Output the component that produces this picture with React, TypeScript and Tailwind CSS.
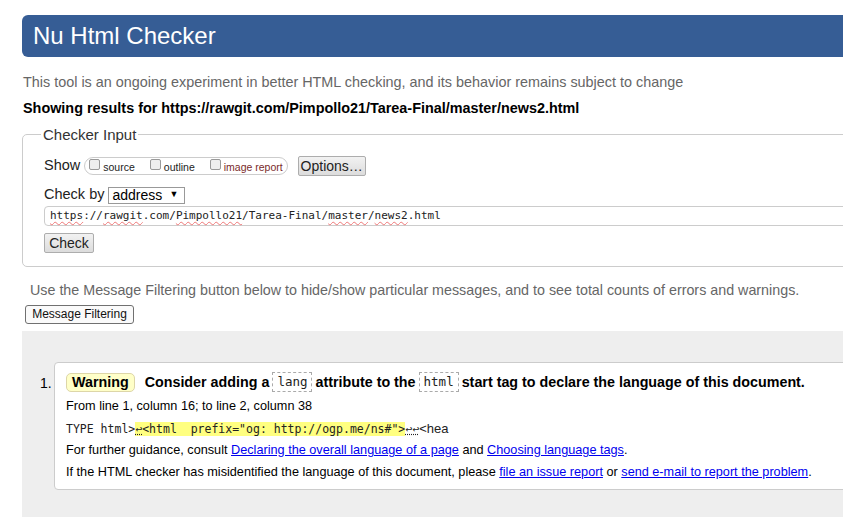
const sans = "font-['Liberation_Sans',Arial,sans-serif]";
const mono = "font-['DejaVu_Sans_Mono','Liberation_Mono',monospace]";

function Squiggle({ children }: { children: React.ReactNode }) {
  return <span className="underline decoration-wavy decoration-[#e77] decoration-1 underline-offset-2">{children}</span>;
}

function Box({ label, color = "text-[#222]" }: { label: string; color?: string }) {
  return (
    <span className="flex items-center whitespace-nowrap">
      <span className="w-[11px] h-[11px] rounded-[2px] border border-[#999] bg-[#eee] mr-[3px] -mt-[2px]" />
      <span className={`text-[10.5px] leading-[12px] pt-[2px] ${color}`}>{label}</span>
    </span>
  );
}

function Code({ children }: { children: React.ReactNode }) {
  return (
    <span className={`${mono} font-normal text-[12.5px] inline-block border border-dashed border-[#aaa] px-[4px] leading-[18px] mx-[3px] align-middle text-[#222]`}>
      {children}
    </span>
  );
}

function Link({ children }: { children: React.ReactNode }) {
  return <a href="#" className="text-[#00e] underline">{children}</a>;
}

export default function App() {
  return (
    <div className={`w-[843px] h-[517px] overflow-hidden bg-white ${sans} text-black`}>
      <div className="w-[900px] pl-[22px] pt-[15px]">
        <h1 className="h-[42px] bg-[#365d95] text-white text-[24px] leading-[42px] pl-[11px] rounded-l-[6px]">
          Nu Html Checker
        </h1>
        <p className="mt-[17px] pl-px text-[14.4px] leading-[16px] text-[#666]">
          This tool is an ongoing experiment in better HTML checking, and its behavior remains subject to change
        </p>
        <p className="mt-[10px] pl-px text-[14.4px] leading-[16px] font-bold">
          Showing results for https://rawgit.com/Pimpollo21/Tarea-Final/master/news2.html
        </p>

        {/* Checker input */}
        <fieldset className="mt-[10px] border border-[#ccc] rounded-[5px] pl-[21px] pb-[13px]">
          <legend className="-ml-[3px] px-[2px] text-[15px] leading-[17px] text-[#333]">Checker Input</legend>
          <div className="flex items-center mt-[13px] h-[19px]">
            <span className="text-[14.5px] text-[#222]">Show</span>
            <div className="ml-[4px] h-[18px] border border-[#ccc] rounded-full flex items-center pl-[4px] pr-[4px] gap-[15px]">
              <Box label="source" />
              <Box label="outline" />
              <Box label="image report" color="text-[#7a2a2a]" />
            </div>
            <button className="ml-[10px] h-[20px] w-[68px] border border-[#adadad] rounded-[2px] bg-gradient-to-b from-[#f2f2f2] to-[#dcdcdc] text-[14px] text-[#222] leading-[18px]">
              Options…
            </button>
          </div>
          <div className="flex items-center mt-[11px] h-[18px]">
            <span className="text-[14.5px] text-[#222]">Check by</span>
            <div className="ml-[4px] h-[17px] w-[77px] border border-[#999] flex items-center justify-between pl-[3px] pr-[6px] text-[14px]">
              <span>address</span>
              <span className="text-[9px]">▼</span>
            </div>
          </div>
          <div className={`mt-[2px] h-[20px] border border-[#ccc] rounded-l-[4px] pl-[5px] ${mono} text-[11px] leading-[18px] text-[#222]`}>
            <Squiggle>https</Squiggle>://<Squiggle>rawgit</Squiggle>.com/<Squiggle>Pimpollo21</Squiggle>/Tarea-Final/<Squiggle>master</Squiggle>/<Squiggle>news2</Squiggle>.html
          </div>
          <button className="mt-[7px] h-[20px] w-[50px] border border-[#adadad] rounded-[2px] bg-gradient-to-b from-[#f2f2f2] to-[#dcdcdc] text-[14px] text-[#222] leading-[18px] block">
            Check
          </button>
        </fieldset>

        <p className="mt-[15px] pl-[8px] text-[14.3px] leading-[16px] text-[#666]">
          Use the Message Filtering button below to hide/show particular messages, and to see total counts of errors and warnings.
        </p>
        <button className="mt-[7px] ml-[3px] h-[19px] w-[109px] border border-[#707070] rounded-[3px] bg-[#fafafa] text-[12px] leading-[17px] text-[#111] block">
          Message Filtering
        </button>

        {/* Results */}
        <div className="mt-[7px] bg-[#eee] pt-[31px] pl-[18px] pb-[40px]">
          <ol>
            <li className="flex">
              <span className="w-[14px] text-[14px] pt-[11px] leading-[20px]">1.</span>
              <div className="flex-1 bg-white border border-[#ccc] rounded-l-[4px] pl-[11px] pt-[8px] pb-[7px]">
                <div className="flex items-center text-[14.3px] font-bold leading-[22px] whitespace-nowrap">
                  <span className="bg-[#ffffc8] border border-[#ddd6a8] rounded-[5px] px-[5px] leading-[17px] h-[19px]">
                    Warning
                  </span>
                  <span className="ml-[10px]">Consider adding a</span>
                  <Code>lang</Code>
                  <span>attribute to the</span>
                  <Code>html</Code>
                  <span>start tag to declare the language of this document.</span>
                </div>
                <p className="mt-[3px] text-[12.7px] leading-[20px]">From line 1, column 16; to line 2, column 38</p>
                <p className={`mt-[5px] ${mono} text-[11.5px] leading-[16px] text-[#222]`}>
                  TYPE html&gt;<span className="bg-[#ffff80]"><span className="underline decoration-dotted">↩</span>&lt;html&nbsp; prefix="og: http://ogp.me/ns#"&gt;</span><span className="underline decoration-dotted">↩↩</span><span className={`${sans} text-[13px]`}>&lt;hea</span>
                </p>
                <p className="mt-[3px] text-[12.7px] leading-[20px]">
                  For further guidance, consult <Link>Declaring the overall language of a page</Link> and <Link>Choosing language tags</Link>.
                </p>
                <p className="mt-[2px] text-[12.7px] leading-[20px] whitespace-nowrap">
                  If the HTML checker has misidentified the language of this document, please <Link>file an issue report</Link> or <Link>send e-mail to report the problem</Link>.
                </p>
              </div>
            </li>
          </ol>
        </div>
      </div>
    </div>
  );
}
